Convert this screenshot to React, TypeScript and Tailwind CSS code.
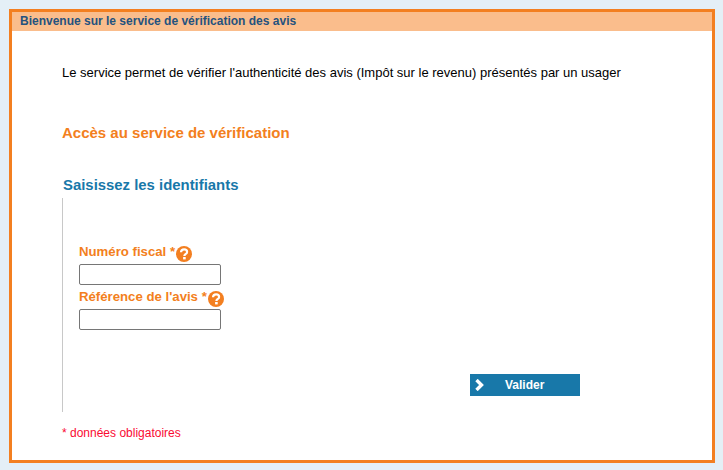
function HelpIcon() {
  return (
    <svg width="16" height="16" viewBox="0 0 16 16" className="shrink-0">
      <circle cx="8" cy="8" r="8" fill="#f37f20" />
      <path
        d="M5 6.2C5.1 4.5 6.4 3.4 8.1 3.4C9.9 3.4 11.1 4.5 11.1 5.9C11.1 7 10.4 7.6 9.5 8.2C8.8 8.7 8.4 9 8.4 10"
        fill="none"
        stroke="#fff"
        strokeWidth="2.2"
      />
      <rect x="7.1" y="11" width="2.6" height="2.4" fill="#fff" />
    </svg>
  );
}

function Field({ label }: { label: string }) {
  return (
    <div>
      <div className="flex h-[20px] w-max items-start">
        <label className="whitespace-nowrap text-[13.2px] leading-[16px] font-bold text-[#f37f20]">{label} *</label>
        <span className="ml-[1px] mt-[2px]">
          <HelpIcon />
        </span>
      </div>
      <input
        type="text"
        className="block h-[21px] w-[142px] rounded-[2px] border border-[#767676] bg-white"
      />
    </div>
  );
}

export default function App() {
  return (
    <div className="h-[470px] w-[723px] overflow-hidden bg-[#e4eff6] pt-[9px] pl-[9px] font-['Liberation_Sans',Arial,sans-serif]">
      <div className="flex h-[454px] w-[706px] flex-col border-[3px] border-[#f37f20] bg-white">
        <h1 className="h-[19px] bg-[#fabd8c] pl-[8px] text-[12px] leading-[18px] font-bold text-[#24527f]">
          Bienvenue sur le service de vérification des avis
        </h1>

        <div className="flex flex-1 flex-col pl-[50px]">
          <p className="mt-[34px] text-[13px] leading-[16px] text-black">
            Le service permet de vérifier l'authenticité des avis (Impôt sur le revenu) présentés par un usager
          </p>

          <h2 className="mt-[43px] text-[15px] leading-[18px] font-bold text-[#f37f20]">
            Accès au service de vérification
          </h2>

          <h3 className="mt-[34px] ml-[1px] text-[14.9px] leading-[18px] font-bold text-[#1878a9]">
            Saisissez les identifiants
          </h3>

          <div className="mt-[4px] flex h-[214px] border-l border-[#c8c8c8]">
            <div className="flex w-[158px] shrink-0 flex-col gap-[4px] pt-[46px] pl-[16px]">
              <Field label="Numéro fiscal" />
              <Field label="Référence de l'avis" />
            </div>
            <div className="flex-1 pt-[176px] pl-[249px]">
              <button className="flex h-[22px] w-[110px] items-center bg-[#1878a9] text-[12px] font-bold text-white">
                <svg width="12" height="12" viewBox="0 0 12 12" className="ml-[4px]">
                  <path d="M2.5 1L7.5 6L2.5 11" fill="none" stroke="#fff" strokeWidth="3.4" />
                </svg>
                <span className="ml-[19px]">Valider</span>
              </button>
            </div>
          </div>

          <p className="mt-[14px] text-[12px] leading-[15px] text-[#fa0a32]">* données obligatoires</p>
        </div>
      </div>
    </div>
  );
}
